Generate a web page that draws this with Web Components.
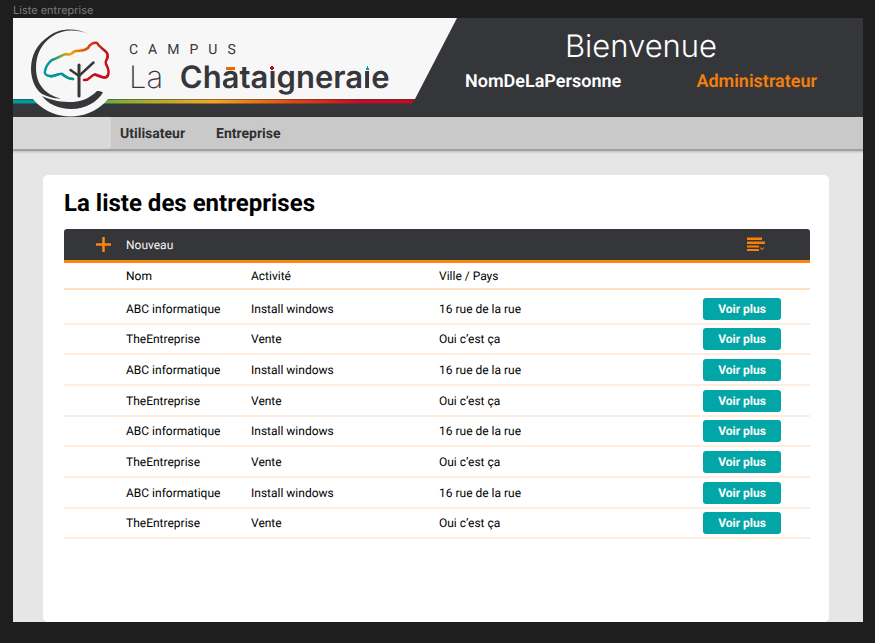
<!DOCTYPE html>
<html lang="fr">
<head>
<meta charset="utf-8">
<meta name="viewport" content="width=device-width, initial-scale=1">
<title>Liste entreprise</title>
<style>
  html { background: #1e1e1e; }
  body { margin: 0; font-family: Roboto, "Liberation Sans", sans-serif; text-rendering: geometricPrecision; }
</style>
</head>
<body>
<app-frame label="Liste entreprise">
  <app-header>
    <campus-logo slot="logo"></campus-logo>
    <user-info name="NomDeLaPersonne" role-name="Administrateur">Bienvenue</user-info>
  </app-header>
  <app-nav>
    <nav-link href="#utilisateur">Utilisateur</nav-link>
    <nav-link href="#entreprise">Entreprise</nav-link>
  </app-nav>
  <list-panel heading="La liste des entreprises">
    <list-toolbar>Nouveau</list-toolbar>
    <company-table></company-table>
  </list-panel>
</app-frame>

<script>
const define = (tag, render) => customElements.define(tag, class extends HTMLElement {
  connectedCallback() {
    if (this.shadowRoot) return;
    this.attachShadow({ mode: 'open' }).innerHTML = render(this);
  }
});

define('app-frame', el => `
  <style>
    :host { display: flex; flex-direction: column; box-sizing: border-box; min-height: 100vh; padding: 2px 12px 21px 13px; }
    .label { font: 11px/16px Inter, sans-serif; color: #7c7c7c; }
    main { flex: 1; display: flex; flex-direction: column; background: #e6e6e6; }
  </style>
  <div class="label">${el.getAttribute('label')}</div>
  <main><slot></slot></main>`);

define('app-header', () => `
  <style>
    :host { display: grid; grid-template-columns: auto 1fr; height: 99px; background: #35363a; color: #fff; }
  </style>
  <slot name="logo"></slot><slot></slot>`);

define('campus-logo', () => `
  <style>
    :host { display: grid; width: 444px; height: 99px; color: #37373b; }
    svg, .words { grid-area: 1 / 1; }
    .words { padding: 24px 0 0 116px; }
    .campus { font: 400 14px/16px Roboto, sans-serif; letter-spacing: 10px; }
    .name { font: 200 31px/40px Inter, sans-serif; white-space: nowrap; }
    b { font-weight: 600; margin-left: 8px; }
    .mark { color: transparent; background: var(--shape), linear-gradient(transparent 11px, #37373b 11px); background-clip: border-box, text; -webkit-background-clip: border-box, text; }
    .bar { --shape: linear-gradient(#ea6a08, #ea6a08) 50% 8px / 9px 3px no-repeat; }
    .dot { --shape: radial-gradient(circle, #c4062b 2px, transparent 2px) 50% 7px / 4px 4px no-repeat; }
    .tip { --shape: conic-gradient(from 153deg at 50% 0, #0b9a9c 54deg, transparent 0) 50% 7px / 5px 4px no-repeat; }
  </style>
  <svg viewBox="13 18 444 99" width="444" height="99" aria-hidden="true" fill="none" stroke-linecap="round">
    <defs>
      <linearGradient id="s" gradientUnits="userSpaceOnUse" x1="13" x2="413" y1="0" y2="0">
        <stop offset="0" stop-color="#009a9c"/><stop offset=".12" stop-color="#009a9c"/><stop offset=".27" stop-color="#8aab35"/>
        <stop offset=".5" stop-color="#f6a623"/><stop offset=".7" stop-color="#dc4a16"/><stop offset=".87" stop-color="#c20b24"/>
      </linearGradient>
      <linearGradient id="t" gradientUnits="userSpaceOnUse" x1="44" x2="110" y1="70" y2="58">
        <stop offset="0" stop-color="#009a9c"/><stop offset=".17" stop-color="#0b9a90"/><stop offset=".3" stop-color="#83a637"/>
        <stop offset=".43" stop-color="#f3a600"/><stop offset=".7" stop-color="#d94a0d"/><stop offset=".95" stop-color="#c50e1d"/>
      </linearGradient>
    </defs>
    <path d="M13 18H457L415 99H13z" fill="#f7f7f7"/>
    <path d="M13 99.500H414.500L412 103.500H13z" fill="url(#s)"/>
    <circle cx="70.500" cy="67.500" r="49" fill="#f7f7f7"/>
    <path d="M90 34.500C77 28 61 27 49 36C37 44 31 55 31 69C31 80 36 90 42 94C48 97 55 99 61 98.500C46 95 36 85 36 68C36 54 42 43 52 36.500C63 29 77 29 90 34.500z" fill="#37373b"/>
    <path d="M42 96C48 104 59 109 71 109C86 109 97 102 103 92.500C101 91 99 91 97 91C91 97 84 101 73 102C61 102 53 101 42 96z" fill="#37373b"/>
    <path d="M73 79C68 79 65 76 62 74C58 73 55 77 50 76C46 76 44 73 45 71C46 66 48 63 52 60C58 58 62 55 66 54C69 55 72 54 74 51.500C79 50 83 52 88 48C90 44 94 42 97 43C99 47 104 49 107 53C110 59 104 60 106 64C107 67 110 70 108 75C106 80 100 76 95 74.500" stroke="url(#t)" stroke-width="2.500"/>
    <path d="M108 75C106 80 100 76 95 74.500C90 75 90 81 84 80" stroke="#c5101e" stroke-width="2.500"/>
    <path d="M73 79C68 79 65 76 62 74C58 73 55 77 50 76" stroke="#009698" stroke-width="2.500"/>
    <path d="M79 65V96" stroke="#37373b" stroke-width="3"/>
    <path d="M70.500 70L79 76L93.500 62.500" stroke="#37373b" stroke-width="2.500"/>
  </svg>
  <div class="words">
    <div class="campus">CAMPUS</div>
    <div class="name">La <b>Ch<span class="mark bar">â</span>ta<span class="mark dot">i</span>gnera<span class="mark tip">i</span>e</b></div>
  </div>`);

define('user-info', el => `
  <style>
    :host { display: block; padding: 7px 46px 0 8px; }
    .hello { font: 300 31px/44px Inter, sans-serif; text-align: center; }
    .who { display: flex; justify-content: space-between; font-size: 18px; line-height: 26px; font-weight: 600; }
    .role { color: #f57f0b; }
  </style>
  <div class="hello"><slot></slot></div>
  <div class="who"><span>${el.getAttribute('name')}</span><span class="role">${el.getAttribute('role-name')}</span></div>`);

define('app-nav', () => `
  <style>
    :host { display: block; background: #c9c9c9; border-bottom: 2px solid #a0a0a0; box-shadow: 0 1px 2px #0003; }
    nav { display: flex; align-items: center; gap: 31px; height: 32px; }
    .blank { width: 98px; height: 32px; margin-right: -22px; border-radius: 0 3px 3px 0; background: #d9d9d9; }
  </style>
  <nav><span class="blank"></span><slot></slot></nav>`);

define('nav-link', el => `
  <style>
    :host { display: block; }
    a { color: #303030; font-size: 14px; line-height: 20px; font-weight: 700; text-decoration: none; }
  </style>
  <a href="${el.getAttribute('href')}"><slot></slot></a>`);

define('list-panel', el => `
  <style>
    :host { flex: 1; display: block; margin: 24px 34px 0 30px; padding: 12px 19px 20px 21px; border-radius: 5px; background: #fff; }
    h1 { margin: 0 0 10px; font-size: 24px; line-height: 32px; font-weight: 700; color: #000; }
  </style>
  <h1>${el.getAttribute('heading')}</h1>
  <slot></slot>`);

define('list-toolbar', () => `
  <style>
    :host { display: flex; justify-content: space-between; align-items: center; height: 31px; padding: 0 44px 0 32px; background: #35363a; border-bottom: 3px solid #fb860f; border-radius: 3px 3px 0 0; }
    button { display: flex; align-items: center; gap: 15px; margin: 0; padding: 0; border: 0; background: none; color: #f5f5f5; font: 12px/16px Roboto, sans-serif; text-rendering: inherit; cursor: pointer; }
    svg { display: block; }
  </style>
  <button type="button">
    <svg width="15" height="15" aria-hidden="true"><path d="M7.500 0V15M0 7.500H15" stroke="#fb860f" stroke-width="2.500"/></svg>
    <slot></slot>
  </button>
  <button type="button" aria-label="Trier">
    <svg width="19" height="15" aria-hidden="true" fill="#fb7f00"><path d="M0 .5H15V3H0zM0 4.500H18V7H0zM0 8.500H12V10.500H0zM0 12H12V14H0z"/><path d="M13 10.500L15 12.500L17 10.500" fill="none" stroke="#c76c14" stroke-width="1.200"/></svg>
  </button>`);

define('teal-button', () => `
  <style>
    :host { display: block; }
    button { display: block; width: 78px; height: 22px; margin: 0; padding: 0; border: 0; border-radius: 3px; background: #03a6a6; color: #fff; font: 700 12px/22px Roboto, sans-serif; text-rendering: inherit; cursor: pointer; }
  </style>
  <button type="button"><slot></slot></button>`);

const companies = Array.from({ length: 8 }, (_, i) => i % 2
  ? ['TheEntreprise', 'Vente', 'Oui c’est ça']
  : ['ABC informatique', 'Install windows', '16 rue de la rue']);

define('company-table', () => `
  <style>
    :host { display: block; }
    table { width: 100%; table-layout: fixed; border-collapse: separate; border-spacing: 0; font-size: 12px; line-height: 16px; color: #000; }
    th, td { height: 29px; box-sizing: content-box; padding: 0; text-align: left; font-weight: 400; border-bottom: 2px solid #ffeedf; }
    th { height: 25px; border-color: #ffdfc1; }
    tbody tr:first-child td { padding-top: 4px; }
    tbody tr:nth-child(3n + 2) td { height: 28px; }
    .name { width: 125px; padding-left: 62px; }
    .activity { width: 188px; }
    .action { width: 78px; padding-right: 29px; }
  </style>
  <table>
    <thead><tr><th class="name">Nom</th><th class="activity">Activité</th><th>Ville / Pays</th><th class="action"></th></tr></thead>
    <tbody>${companies.map(([n, a, v]) => `<tr><td class="name">${n}</td><td>${a}</td><td>${v}</td><td class="action"><teal-button>Voir plus</teal-button></td></tr>`).join('')}</tbody>
  </table>`);
</script>
</body>
</html>
